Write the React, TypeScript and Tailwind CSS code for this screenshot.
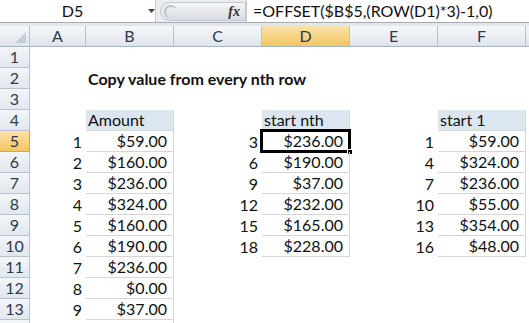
import React from "react";

const COLS = [
  { key: "A", w: "w-[56px]" },
  { key: "B", w: "w-[88px]" },
  { key: "C", w: "w-[88px]" },
  { key: "D", w: "w-[88px]" },
  { key: "E", w: "w-[88px]" },
  { key: "F", w: "w-[88px]" },
];

type Cell = { text?: string; align?: "l" | "r"; bold?: boolean; table?: "head" | "body"; active?: boolean };
type Row = Partial<Record<string, Cell>>;

const amounts = ["$59.00", "$160.00", "$236.00", "$324.00", "$160.00", "$190.00", "$236.00", "$0.00", "$37.00", ""];
const nth = [
  ["3", "$236.00"],
  ["6", "$190.00"],
  ["9", "$37.00"],
  ["12", "$232.00"],
  ["15", "$165.00"],
  ["18", "$228.00"],
];
const first = [
  ["1", "$59.00"],
  ["4", "$324.00"],
  ["7", "$236.00"],
  ["10", "$55.00"],
  ["13", "$354.00"],
  ["16", "$48.00"],
];

function buildRows(): Row[] {
  const rows: Row[] = [];
  for (let i = 1; i <= 14; i++) rows.push({});
  rows[1] = { B: { text: "Copy value from every nth row", bold: true } };
  rows[3] = {
    B: { text: "Amount", table: "head" },
    D: { text: "start nth", table: "head" },
    F: { text: "start 1", table: "head" },
  };
  amounts.forEach((a, i) => {
    const r = rows[4 + i];
    if (!r) return;
    if (a) r.A = { text: String(i + 1), align: "r" };
    r.B = { text: a, align: "r", table: "body" };
  });
  nth.forEach(([n, v], i) => {
    rows[4 + i].C = { text: n, align: "r" };
    rows[4 + i].D = { text: v, align: "r", table: "body", active: i === 0 };
  });
  first.forEach(([n, v], i) => {
    rows[4 + i].E = { text: n, align: "r" };
    rows[4 + i].F = { text: v, align: "r", table: "body" };
  });
  return rows;
}

function GridCell({ cell, w }: { cell?: Cell; w: string }) {
  const base = `${w} h-[21px] shrink-0 relative flex items-center whitespace-nowrap`;
  if (!cell) return <div className={base} />;
  const tableCls =
    cell.table === "head"
      ? "bg-[#dce6f1] border-r border-b border-[#d6d6d6] pl-[2px]"
      : cell.table === "body"
      ? "border-r border-b border-[#d6d6d6] pr-[6px]"
      : "pr-[4px]";
  return (
    <div
      className={`${base} ${tableCls} ${cell.align === "r" ? "justify-end" : "justify-start"} ${
        cell.bold ? "font-bold overflow-visible" : ""
      }`}
    >
      <span className={cell.bold ? "absolute left-[2px]" : ""}>{cell.text}</span>
      {cell.active && (
        <>
          <div className="absolute inset-[-2px] border-[3px] border-black" />
          <div className="absolute right-[-4px] bottom-[-4px] w-[6px] h-[6px] bg-black border border-white" />
        </>
      )}
    </div>
  );
}

export default function App() {
  const rows = buildRows();
  return (
    <div className="w-[529px] h-[323px] overflow-hidden bg-white text-[#111] font-['Lato','Liberation_Sans',sans-serif] text-[16px]">
      {/* formula bar */}
      <div className="flex h-[23px] border-b border-[#a5acb5] bg-white">
        <div className="w-[156px] flex items-center relative border-r border-[#c5cad1]">
          <span className="w-[145px] text-center">D5</span>
          <svg className="absolute left-[148px] top-[9px]" width="7" height="4" viewBox="0 0 7 4">
            <path d="M0 0h7L3.5 4z" fill="#444" />
          </svg>
        </div>
        <div className="w-[90px] bg-[#e9ecf0] flex items-center pl-[4px]">
          <div className="h-[19px] w-[86px] rounded-l-full bg-gradient-to-b from-[#f4f5f7] to-[#d8dce2] border border-[#c3c8cf] flex items-center justify-end pr-[5px] relative">
            <div className="absolute left-[3px] top-[2px] w-[13px] h-[13px] rounded-full border-l-2 border-t-2 border-[#b9bec6]" />
            <span className="font-['Liberation_Serif',serif] italic font-bold text-[14px] text-[#333]">fx</span>
          </div>
        </div>
        <div className="flex-1 flex items-center pl-[6px] border-l border-[#c5cad1]">
          =OFFSET($B$5,(ROW(D1)*3)-1,0)
        </div>
      </div>
      <div className="h-[3px] bg-[#e3e7ec]" />
      {/* column headers */}
      <div className="flex h-[21px] bg-gradient-to-b from-[#f6f8fb] to-[#dfe4eb] border-b border-[#9eb6ce] text-[#2c3a4a]">
        <div className="w-[30px] shrink-0 border-r border-[#b8c2ce] relative">
          <svg className="absolute right-[3px] bottom-[3px]" width="11" height="11" viewBox="0 0 11 11">
            <path d="M11 0V11H0z" fill="#c6cdd6" />
          </svg>
        </div>
        {COLS.map((c) => (
          <div
            key={c.key}
            className={`${c.w} shrink-0 flex items-center justify-center border-r border-[#b8c2ce] ${
              c.key === "D" ? "bg-gradient-to-b from-[#fbe3a8] to-[#f3c55d]" : ""
            }`}
          >
            {c.key}
          </div>
        ))}
        <div className="flex-1" />
      </div>
      {/* rows */}
      {rows.map((r, i) => (
        <div key={i} className="flex h-[21px]">
          <div
            className={`w-[30px] shrink-0 flex items-center justify-center border-r border-b text-[#2c3a4a] ${
              i === 4
                ? "bg-gradient-to-b from-[#fbe3a8] to-[#f3c55d] border-[#c9a85a]"
                : "bg-gradient-to-b from-[#f3f6f9] to-[#e2e7ee] border-[#b8c2ce]"
            }`}
          >
            {i < 13 ? i + 1 : ""}
          </div>
          {COLS.map((c) => (
            <GridCell key={c.key} cell={r[c.key]} w={c.w} />
          ))}
        </div>
      ))}
    </div>
  );
}
